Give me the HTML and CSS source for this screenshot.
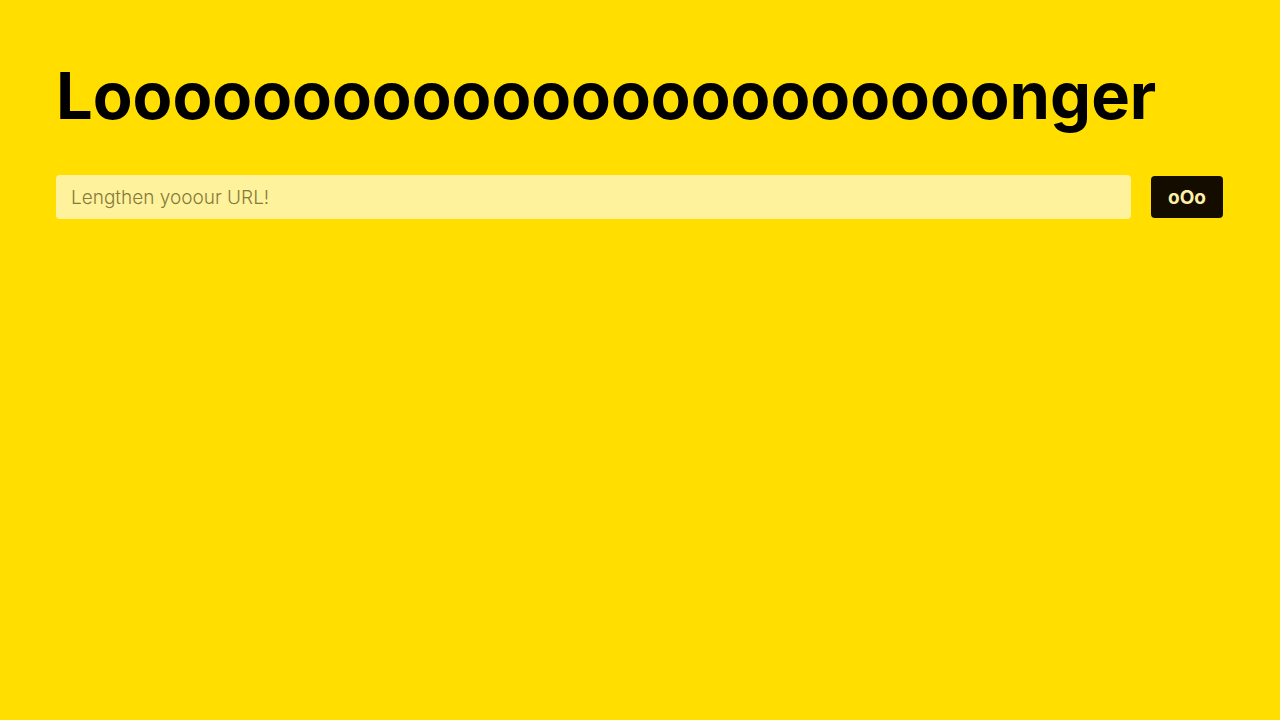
FILE: index.html
```html
<!DOCTYPE html>
<html lang="en">
<head>
<meta charset="utf-8">
<title>Looooonger</title>
<link rel="stylesheet" href="styles.css">
</head>
<body>
<main class="page">
  <h1 class="title">Looooooooooooooooooooooonger</h1>
  <form class="form">
    <input class="url-input" type="text" placeholder="Lengthen yooour URL!">
    <button class="go-btn" type="button">oOo</button>
  </form>
</main>
</body>
</html>
```

FILE: styles.css
```css
html, body {
  margin: 0;
  padding: 0;
  background: #ffde00;
  height: 100%;
}
body {
  font-family: Inter, "Noto Sans", sans-serif;
  color: #000;
}
.page {
  padding: 56px 57px 56px 56px;
  display: flex;
  flex-direction: column;
  gap: 39px;
}
.title {
  margin: 0;
  font-size: 65px;
  font-weight: 700;
  line-height: 80px;
  letter-spacing: 0;
  white-space: nowrap;
}
.form {
  display: flex;
  align-items: center;
  gap: 20px;
}
.url-input {
  flex: 1;
  height: 44px;
  box-sizing: border-box;
  border: none;
  outline: none;
  border-radius: 4px;
  background: #fff29c;
  padding: 0 15px;
  font-family: Inter, "Noto Sans", sans-serif;
  font-size: 19px;
  font-weight: 300;
  color: #333;
}
.url-input::placeholder {
  color: #857b3b;
}
.go-btn {
  width: 72px;
  height: 42px;
  border: none;
  border-radius: 4px;
  background: #150c00;
  color: #fff0a8;
  font-family: Inter, "Noto Sans", sans-serif;
  font-size: 19px;
  font-weight: 700;
  cursor: pointer;
}
```
